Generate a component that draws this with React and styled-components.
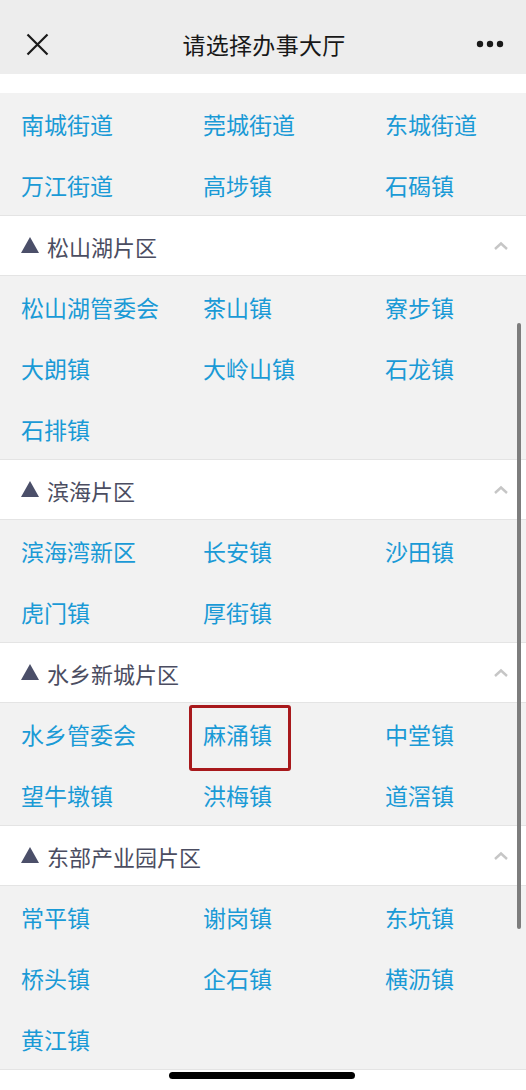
import styled, { createGlobalStyle } from "styled-components";

const GlobalStyle = createGlobalStyle`
  html, body {
    margin: 0;
    padding: 0;
    background: #ffffff;
    font-family: "Noto Sans CJK SC", "Noto Sans", sans-serif;
  }
  * { box-sizing: border-box; }
`;

const Page = styled.div`
  position: relative;
  width: 526px;
  height: 1090px;
  overflow: hidden;
  background: #ffffff;
`;

const NavBar = styled.div`
  height: 74px;
  background: #ededed;
  display: grid;
  grid-template-columns: 1fr auto 1fr;
  align-items: center;
  padding: 14px 22px 0 24px;
`;

const NavTitle = styled.div`
  font-size: 23px;
  color: #181818;
  letter-spacing: 0.3px;
`;

const IconBtn = styled.div`
  display: flex;
  align-items: center;
  justify-content: ${(p) => (p.$right ? "flex-end" : "flex-start")};
`;

const Spacer = styled.div`
  height: 19px;
  background: #ffffff;
`;

const SectionHead = styled.div`
  height: 61px;
  background: #ffffff;
  border-top: 1px solid #e4e4e4;
  border-bottom: 1px solid #e4e4e4;
  display: flex;
  align-items: center;
  justify-content: space-between;
  padding: 0 17px 0 21px;
  font-size: 22px;
  color: #4b4d61;
`;

const HeadLabel = styled.div`
  display: flex;
  align-items: center;
  gap: 8px;
`;

const Tri = styled.span`
  width: 0;
  height: 0;
  border-left: 9px solid transparent;
  border-right: 9px solid transparent;
  border-bottom: 16px solid #4b4f69;
  margin-top: -2px;
`;

const Grid = styled.div`
  background: #f2f2f2;
  display: grid;
  grid-template-columns: 182px 182px 141px;
  grid-auto-rows: 61px;
  padding-left: 21px;
`;

const Cell = styled.div`
  position: relative;
  display: flex;
  align-items: center;
  font-size: 23px;
  color: #1a9ad6;
  white-space: nowrap;

  ${(p) =>
    p.$highlight &&
    `
    &::after {
      content: "";
      position: absolute;
      left: -14px;
      top: 2px;
      width: 96px;
      height: 60px;
      border: 3px solid #a8191c;
      border-radius: 3px;
    }
  `}
`;

const BottomLine = styled.div`
  border-top: 1px solid #e4e4e4;
`;

const ScrollBar = styled.div`
  position: absolute;
  left: 517px;
  top: 323px;
  width: 4px;
  height: 606px;
  border-radius: 2px;
  background: #7d7d7d;
`;

const HomeBar = styled.div`
  position: absolute;
  left: 169px;
  top: 1072px;
  width: 186px;
  height: 7px;
  border-radius: 4px;
  background: #000000;
`;

const Chevron = () => (
  <svg width="16" height="10" viewBox="0 0 16 10">
    <path d="M2 8 L8 2.5 L14 8" fill="none" stroke="#c6c6c6" strokeWidth="2.4" />
  </svg>
);

const sections = [
  { title: null, items: ["南城街道", "莞城街道", "东城街道", "万江街道", "高埗镇", "石碣镇"] },
  { title: "松山湖片区", items: ["松山湖管委会", "茶山镇", "寮步镇", "大朗镇", "大岭山镇", "石龙镇", "石排镇"] },
  { title: "滨海片区", items: ["滨海湾新区", "长安镇", "沙田镇", "虎门镇", "厚街镇"] },
  { title: "水乡新城片区", items: ["水乡管委会", "麻涌镇", "中堂镇", "望牛墩镇", "洪梅镇", "道滘镇"] },
  { title: "东部产业园片区", items: ["常平镇", "谢岗镇", "东坑镇", "桥头镇", "企石镇", "横沥镇", "黄江镇"] },
];

export default function App() {
  return (
    <Page>
      <GlobalStyle />
      <NavBar>
        <IconBtn>
          <svg width="26" height="26" viewBox="0 0 26 26">
            <path d="M3.5 3.5 L23.5 23.5 M23.5 3.5 L3.5 23.5" stroke="#1a1a1a" strokeWidth="2.2" />
          </svg>
        </IconBtn>
        <NavTitle>请选择办事大厅</NavTitle>
        <IconBtn $right>
          <svg width="28" height="8" viewBox="0 0 28 8">
            <circle cx="4" cy="4" r="3.2" fill="#1a1a1a" />
            <circle cx="14" cy="4" r="3.2" fill="#1a1a1a" />
            <circle cx="24" cy="4" r="3.2" fill="#1a1a1a" />
          </svg>
        </IconBtn>
      </NavBar>
      <Spacer />
      {sections.map((s, i) => (
        <div key={i}>
          {s.title && (
            <SectionHead>
              <HeadLabel>
                <Tri />
                {s.title}
              </HeadLabel>
              <Chevron />
            </SectionHead>
          )}
          <Grid>
            {s.items.map((it) => (
              <Cell key={it} $highlight={it === "麻涌镇"}>
                {it}
              </Cell>
            ))}
          </Grid>
        </div>
      ))}
      <BottomLine />
      <ScrollBar />
      <HomeBar />
    </Page>
  );
}
